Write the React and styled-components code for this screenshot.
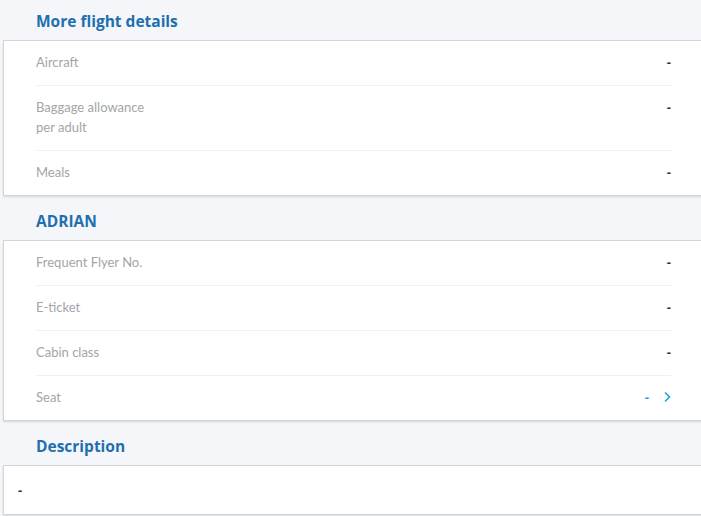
import React from "react";
import styled, { createGlobalStyle } from "styled-components";

const Global = createGlobalStyle`
  html, body { margin: 0; padding: 0; background: #f4f6fa; overflow: hidden; }
  body { font-family: Lato, "Open Sans", sans-serif; }
`;

const Page = styled.div`
  display: flex;
  flex-direction: column;
  width: 701px;
`;

const SectionTitle = styled.h2`
  margin: 0;
  height: 40px;
  padding: 2px 0 0 36px;
  display: flex;
  align-items: center;
  box-sizing: border-box;
  font-family: "Open Sans", Lato, sans-serif;
  font-size: 15.5px;
  font-weight: 700;
  color: #1f6fae;
`;

const Card = styled.div`
  margin: 0 -6px 4px 3px;
  background: #fff;
  border: 1px solid #d2d4d8;
  box-shadow: 0 1px 2px rgba(0, 0, 0, 0.12);
  padding: ${(p) => (p.$plain ? "0 14px" : "0 35px 0 32px")};
`;

const Row = styled.div`
  display: flex;
  justify-content: space-between;
  align-items: flex-start;
  padding: 11px 0 13px;
  border-bottom: 1px solid #eef0f2;
  &:last-child { border-bottom: none; }
`;

const Label = styled.div`
  font-size: 13px;
  line-height: 20px;
  color: #a3a5a8;
  max-width: 130px;
`;

const Value = styled.div`
  display: flex;
  align-items: center;
  gap: 14px;
  font-family: "Open Sans", Lato, sans-serif;
  font-size: 13px;
  line-height: 20px;
  font-weight: 700;
  color: ${(p) => (p.$link ? "#1aa3e0" : "#333")};
`;

const DescBody = styled.div`
  height: 48px;
  display: flex;
  align-items: center;
  font-family: "Open Sans", Lato, sans-serif;
  font-size: 13px;
  font-weight: 700;
  color: #333;
`;

const Chevron = () => (
  <svg width="8" height="12" viewBox="0 0 8 12" fill="none">
    <path d="M2 1.5 L6.5 6 L2 10.5" stroke="#1aa3e0" strokeWidth="1.6" />
  </svg>
);

export default function App() {
  return (
    <Page>
      <Global />
      <SectionTitle>More flight details</SectionTitle>
      <Card>
        <Row><Label>Aircraft</Label><Value>-</Value></Row>
        <Row><Label>Baggage allowance per adult</Label><Value>-</Value></Row>
        <Row><Label>Meals</Label><Value>-</Value></Row>
      </Card>
      <SectionTitle>ADRIAN</SectionTitle>
      <Card>
        <Row><Label>Frequent Flyer No.</Label><Value>-</Value></Row>
        <Row><Label>E-ticket</Label><Value>-</Value></Row>
        <Row><Label>Cabin class</Label><Value>-</Value></Row>
        <Row><Label>Seat</Label><Value $link>-<Chevron /></Value></Row>
      </Card>
      <SectionTitle>Description</SectionTitle>
      <Card $plain>
        <DescBody>-</DescBody>
      </Card>
    </Page>
  );
}
